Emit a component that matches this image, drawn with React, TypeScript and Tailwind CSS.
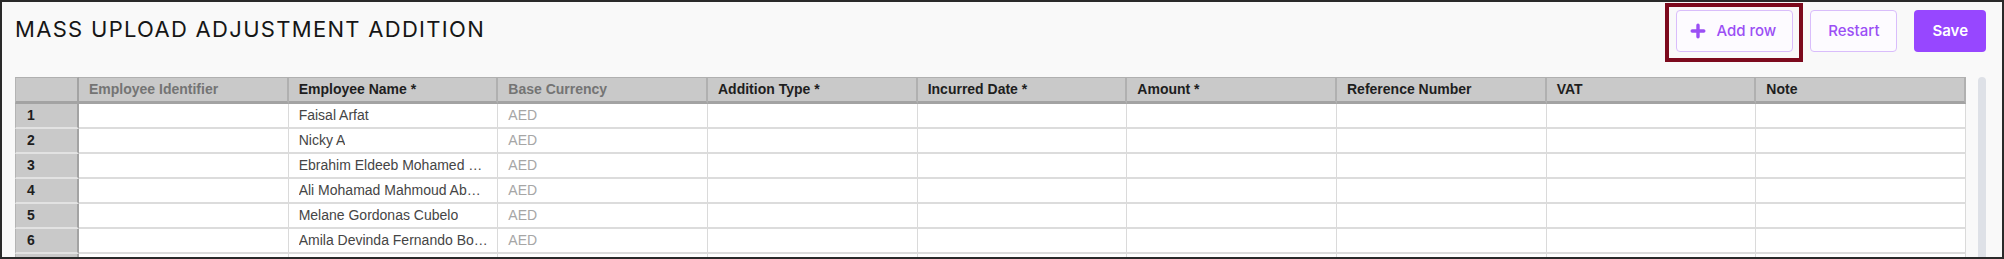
import React from 'react';

const columns = [
  { label: 'Employee Identifier', muted: true },
  { label: 'Employee Name *' },
  { label: 'Base Currency', muted: true },
  { label: 'Addition Type *' },
  { label: 'Incurred Date *' },
  { label: 'Amount *' },
  { label: 'Reference Number' },
  { label: 'VAT' },
  { label: 'Note' },
];

const rows = [
  'Faisal Arfat',
  'Nicky A',
  'Ebrahim Eldeeb Mohamed …',
  'Ali Mohamad Mahmoud Ab…',
  'Melane Gordonas Cubelo',
  'Amila Devinda Fernando Bo…',
  '',
];

function PlusIcon() {
  return (
    <svg width="16" height="16" viewBox="0 0 16 16" className="shrink-0">
      <path d="M8 2.2v11.6M2.2 8h11.6" stroke="#9b4ff5" strokeWidth="3.4" strokeLinecap="round" fill="none" />
    </svg>
  );
}

export default function App() {
  return (
    <div className="w-[2004px] h-[259px] overflow-hidden border-2 border-[#2a2a2a] bg-[#f9f9f9] pl-[13px] pr-[16px] pt-[8px] font-['Inter',sans-serif]">
      <div className="flex items-center justify-between h-[42px]">
        <h1 className="mb-[5px] text-[22px] tracking-[1.3px] text-[#161616] font-normal leading-[28px]">
          MASS UPLOAD ADJUSTMENT ADDITION
        </h1>
        <div className="flex items-center gap-[17px]">
          <div className="relative">
            <button className="flex items-center gap-[10px] h-[42px] pl-[13px] pr-[16px] rounded-[4px] border border-[#d9bdfb] bg-[#fdfbff] text-[15px] font-medium text-[#9b4ff5]">
              <PlusIcon />
              Add row
            </button>
            <div className="pointer-events-none absolute -left-[11px] -right-[10px] -top-[7px] -bottom-[10px] border-[4px] border-[#7c0a1d]" />
          </div>
          <button className="h-[42px] px-[17px] rounded-[4px] border border-[#d9bdfb] bg-[#fdfbff] text-[15px] font-medium text-[#9b4ff5]">
            Restart
          </button>
          <button className="h-[42px] px-[18px] rounded-[4px] bg-[#9747ff] text-[15px] font-semibold text-white">
            Save
          </button>
        </div>
      </div>

      <div className="mt-[25px] flex gap-[12px]">
        <div className="flex-1 grid grid-cols-[64px_repeat(9,minmax(0,1fr))] font-['Liberation_Sans',Arial,sans-serif] text-[14px]">
          <div className="h-[27px] bg-[#c9c9c9] border-l border-t border-b-[3px] border-r-2 border-l-[#b4b4b4] border-t-[#b0b0b0] border-b-[#a3a3a3] border-r-[#a3a3a3]" />
          {columns.map((c) => (
            <div
              key={c.label}
              className={`h-[27px] flex items-center pl-[10px] bg-[#c9c9c9] border-t border-b-[3px] border-r-2 border-t-[#b0b0b0] border-b-[#a3a3a3] border-r-[#b0b0b0] font-bold truncate ${c.muted ? 'text-[#747474]' : 'text-[#1e1e1e]'}`}
            >
              {c.label}
            </div>
          ))}
          {rows.map((name, i) => (
            <React.Fragment key={i}>
              <div className="h-[25px] flex items-center pl-[11px] bg-[#c9c9c9] border-l border-l-[#b4b4b4] border-r-2 border-r-[#a3a3a3] border-b-2 border-b-[#e2e2e2] font-bold text-[#1e1e1e]">
                {name !== '' ? i + 1 : ''}
              </div>
              {columns.map((c, j) => (
                <div
                  key={c.label}
                  className="h-[25px] flex items-center pl-[10px] pr-[8px] bg-white border-r border-b-2 border-r-[#dadada] border-b-[#dcdcdc] truncate"
                >
                  {j === 1 && <span className="truncate text-[#454545]">{name}</span>}
                  {j === 2 && name !== '' && <span className="text-[#a6a6a6]">AED</span>}
                </div>
              ))}
            </React.Fragment>
          ))}
        </div>
        <div className="w-[8px] h-[200px] rounded-full bg-[#dee1e7]" />
      </div>
    </div>
  );
}
